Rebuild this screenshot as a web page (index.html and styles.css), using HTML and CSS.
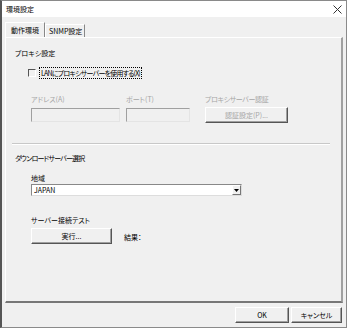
FILE: index.html
```html
<!DOCTYPE html>
<html lang="ja">
<head>
    <meta charset="UTF-8">
    <title>環境設定</title>
    <link rel="stylesheet" href="styles.css">
</head>
<body>
    <div class="window">
        <div class="titlebar">
            <span class="title">環境設定</span>
            <svg class="close" width="9" height="9" viewBox="0 0 9 9">
                <path d="M0.5 0.5 L8.5 8.5 M8.5 0.5 L0.5 8.5" stroke="#333" stroke-width="1" fill="none"/>
            </svg>
        </div>
        <div class="body">
            <div class="tabs">
                <div class="tab active">動作環境</div>
                <div class="tab">SNMP設定</div>
            </div>
            <div class="panel">
                <div class="label group-title">プロキシ設定</div>
                <div class="check-row">
                    <span class="checkbox"></span>
                    <span class="check-label tight">LANにプロキシサーバーを使用する(X)</span>
                </div>
                <div class="proxy-row">
                    <div class="field addr">
                        <div class="label disabled">アドレス(A)</div>
                        <div class="input"></div>
                    </div>
                    <div class="field port">
                        <div class="label disabled">ポート(T)</div>
                        <div class="input"></div>
                    </div>
                    <div class="field auth">
                        <div class="label disabled semi-tight">プロキシサーバー認証</div>
                        <button class="btn disabled auth-btn">認証設定(P)...</button>
                    </div>
                </div>
                <div class="separator"></div>
                <div class="label group-title tight">ダウンロードサーバー選択</div>
                <div class="label sub region-label">地域</div>
                <div class="select">
                    <span class="select-value">JAPAN</span>
                    <span class="select-arrow">
                        <svg width="5" height="3" viewBox="0 0 5 3"><path d="M0 0 H5 L2.5 3 Z" fill="#000"/></svg>
                    </span>
                </div>
                <div class="label sub test-label">サーバー接続テスト</div>
                <div class="test-row">
                    <button class="btn run-btn">実行...</button>
                    <span class="label result">結果：</span>
                </div>
            </div>
            <div class="footer">
                <button class="btn ok-btn">OK</button>
                <button class="btn cancel-btn">キャンセル</button>
            </div>
        </div>
    </div>
</body>
</html>
```

FILE: styles.css
```css
html, body {
    margin: 0;
    padding: 0;
}
body {
    font-family: "Noto Sans CJK JP", "Noto Sans", sans-serif;
    font-size: 7px;
    font-feature-settings: "palt";
    color: #000;
    background-color: #fff;
}
.window {
    width: 347px;
    height: 328px;
    box-sizing: border-box;
    border: 1px solid #8a8a8a;
    border-left: 2px solid #555;
    display: flex;
    flex-direction: column;
}
.titlebar {
    height: 16px;
    background-color: #fff;
    display: flex;
    align-items: center;
    justify-content: space-between;
    padding: 0 4px 0 4px;
}
.title {
    line-height: 10px;
}
.close {
    margin-top: 1px;
}
.body {
    flex: 1;
    background-color: #f0f0f0;
    padding: 0 3px 0 3px;
    display: flex;
    flex-direction: column;
}
.tabs {
    display: flex;
    align-items: flex-end;
    height: 20px;
}
.tab {
    height: 13px;
    line-height: 12px;
    padding: 0 2px 0 3px;
    border-left: 1px solid #fff;
    border-top: 1px solid #fff;
    border-right: 1px solid #888;
    box-sizing: border-box;
}
.tab.active {
    height: 15px;
    line-height: 14px;
    padding: 0 5px 0 5px;
    background-color: #f0f0f0;
}
.panel {
    height: 266px;
    box-sizing: border-box;
    border-top: 1px solid #fff;
    border-left: 1px solid #fff;
    border-right: 2px solid #a0a0a0;
    border-bottom: 2px solid #777;
    padding: 10px 0 0 9px;
}
.label {
    line-height: 10px;
    height: 10px;
    white-space: nowrap;
}
.tight {
    letter-spacing: -0.8px;
}
.semi-tight {
    letter-spacing: -0.4px;
}
.disabled {
    color: #a6a6a6;
}
.check-row {
    margin: 9px 0 0 13px;
    display: flex;
    align-items: center;
    height: 12px;
}
.checkbox {
    width: 6px;
    height: 6px;
    border-top: 1px solid #555;
    border-left: 1px solid #555;
    border-right: 1px solid #fff;
    border-bottom: 1px solid #fff;
    margin-right: 3px;
}
.check-label {
    border: 1px dotted #000;
    line-height: 10px;
    padding: 0 1px;
}
.proxy-row {
    display: flex;
    margin: 15px 0 0 16px;
}
.field .input {
    height: 14px;
    box-sizing: border-box;
    margin-top: 4px;
    border-top: 1px solid #a0a0a0;
    border-left: 1px solid #a0a0a0;
    border-right: 1px solid #e4e4e4;
    border-bottom: 1px solid #e4e4e4;
    background-color: #f0f0f0;
}
.addr {
    width: 89px;
    margin-right: 6px;
}
.port {
    width: 64px;
    margin-right: 15px;
}
.btn {
    font-family: inherit;
    font-size: 7px;
    font-feature-settings: "palt";
    color: #000;
    background-color: #f0f0f0;
    box-sizing: border-box;
    border-top: 1px solid #fff;
    border-left: 1px solid #fff;
    border-right: 1px solid #555;
    border-bottom: 1px solid #555;
    box-shadow: inset -1px -1px 0 #a0a0a0;
    padding: 0;
    line-height: 12px;
    height: 16px;
}
.btn.disabled {
    color: #a6a6a6;
}
.auth-btn {
    width: 83px;
    margin-top: 3px;
}
.separator {
    margin: 20px 0 0 -3px;
    width: 318px;
    height: 0;
    border-top: 1px solid #c8c8c8;
    border-bottom: 1px solid #fff;
}
.separator + .group-title {
    margin-top: 8px;
}
.sub {
    margin-left: 16px;
}
.region-label {
    margin-top: 10px;
}
.select {
    margin: 1px 0 0 16px;
    width: 211px;
    height: 12px;
    box-sizing: border-box;
    background-color: #fff;
    border-top: 1px solid #888;
    border-left: 1px solid #888;
    border-right: 1px solid #ddd;
    border-bottom: 1px solid #ddd;
    display: flex;
    align-items: center;
    justify-content: space-between;
}
.select-value {
    padding-left: 2px;
    line-height: 10px;
}
.select-arrow {
    width: 9px;
    height: 10px;
    box-sizing: border-box;
    background-color: #f0f0f0;
    border-top: 1px solid #fff;
    border-left: 1px solid #fff;
    border-right: 1px solid #777;
    border-bottom: 1px solid #777;
    display: flex;
    align-items: center;
    justify-content: center;
}
.test-label {
    margin-top: 19px;
}
.test-row {
    margin: 3px 0 0 16px;
    display: flex;
    align-items: center;
}
.run-btn {
    width: 81px;
}
.result {
    margin-left: 12px;
    margin-top: 1px;
}
.footer {
    display: flex;
    justify-content: flex-end;
    padding: 4px 0 0 0;
}
.ok-btn {
    width: 54px;
    margin-right: 2px;
}
.cancel-btn {
    width: 51px;
    margin-right: 1px;
}
```
